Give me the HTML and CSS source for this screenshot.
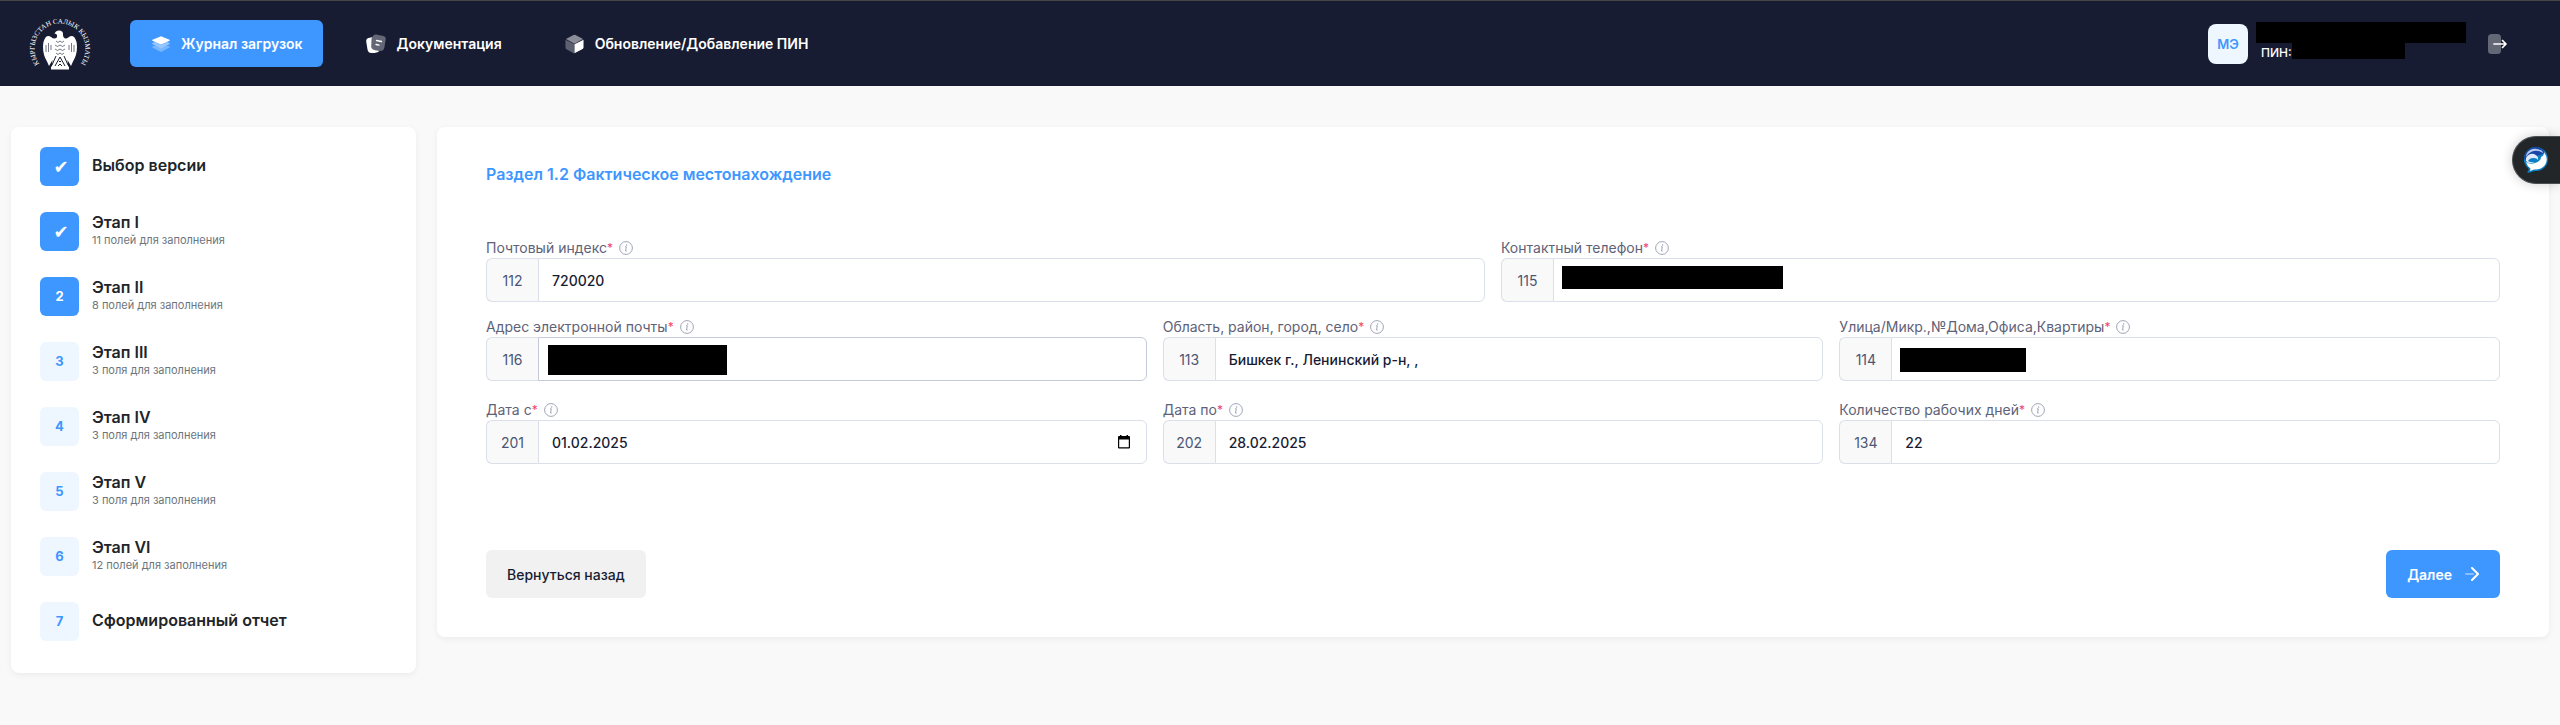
FILE: index.html
```html
<!DOCTYPE html>
<html lang="ru">
<head>
<meta charset="utf-8">
<meta name="viewport" content="width=device-width, initial-scale=1">
<title>Раздел 1.2 Фактическое местонахождение</title>
<link rel="stylesheet" href="styles.css">
</head>
<body>
<svg class="defs" aria-hidden="true">
  <symbol id="info" viewBox="0 0 14 14">
    <circle cx="7" cy="7" r="6.400" fill="none" stroke="currentColor" stroke-width="1"/>
    <path d="M6 5.800h1.300L6.500 10h1.200" fill="none" stroke="currentColor" stroke-width="1"/>
    <circle cx="7.600" cy="3.900" r=".75" fill="currentColor"/>
  </symbol>
</svg>
<header class="header">
  <a class="logo" href="#" aria-label="Кыргызстан салык кызматы">
    <svg width="64" height="56" viewBox="0 0 64 56">
      <path id="arc" d="M13.1 50.1A25.500 25.500 0 1 1 50.900 50.100" fill="none"/>
      <text class="logo-text"><textPath href="#arc" startOffset="50%" text-anchor="middle">КЫРГЫЗСТАН САЛЫК КЫЗМАТЫ</textPath></text>
      <path fill="#fff" d="M26.500 17.500q1.500-3 4.500-3 4.500 0 4 4.500 0 3 2 3.500 2 .2 4-1.500 3-2 5.500.5 2.500 3.500 2.500 9.500 0 8-4 14.500L43 50l-3.500-6 .5 6 1 1v2.500H23V51l1-1 .5-6L21 50l-2-4.500Q15 39 15 31q0-6 2.500-9.500 2.500-2.500 5.500-.5 2 1.700 4 1.500 2.500-.5 2-3.500-.5-1.500-2.500-1.500z"/>
      <path fill="none" stroke="#181c32" stroke-width=".6" d="M18 29v7m2.500-9v9m2.500-7v5M46 29v7m-2.500-9v9M41 29v5M28 25l2 1.500 2-1.500 2 1.500 2-1.500M27 29l2.500 1.500L32 29l2.500 1.500L37 29M27 33l2.500 1.500L32 33l2.500 1.500L37 33M28 37l2 1.500 2-1.500 2 1.500 2-1.500"/>
      <path fill="none" stroke="#181c32" stroke-width="1" d="m28 40-4 9m12-9 4 9M32 41l-5 9m5-9 5 9M31 46l1-1 1 1m-3 4 2-2 2 2"/>
    </svg>
  </a>
  <nav class="nav">
    <a class="nav-link active" href="#">
      <svg width="18" height="18" viewBox="0 0 18 18" fill="#fff">
        <path opacity=".3" d="M.5 11.500 3 10.500l6 2.800 6-2.800 2.500 1q.7.500 0 1L9.600 16.700q-.6.300-1.200 0L.5 12.500q-.7-.5 0-1z"/>
        <path opacity=".45" d="M.5 8 3 7l6 2.800L15 7l2.500 1q.7.500 0 1L9.600 13.200q-.6.300-1.200 0L.5 9q-.7-.5 0-1z"/>
        <path d="M8.400 1.400q.6-.3 1.200 0l7.900 3.400q.7.500 0 .9L9.600 9.300q-.6.300-1.200 0L.5 5.700q-.7-.4 0-.9z"/>
      </svg>
      Журнал загрузок</a>
    <a class="nav-link" href="#">
      <svg width="20" height="20" viewBox="0 0 20 20">
        <path fill="#fff" d="M7 3 2.500 4Q0 4.500.2 7.500l1.300 8q.7 3.500 4 3.500h3q3.500-.3 5-2L6 12z"/>
        <path fill="#646776" d="m10 .5 7.500 1.500q2.500.6 2.300 3l-1.500 9q-.8 3-4 3L9 16.200q-3.300-.6-3.800-3.200L5.500 5Q6.500.5 10 .5z"/>
        <path stroke="#fff" stroke-width="1.300" stroke-linecap="round" d="m10.500 6.500 5 1m-5.500 3 3 .6"/>
      </svg>
      Документация</a>
    <a class="nav-link" href="#">
      <svg width="19" height="20" viewBox="0 0 20 20">
        <path fill="#8b8d98" d="M9 .5q1-.5 2 0l8 4.200-9 5L1 4.700z"/>
        <path fill="#5d6070" d="M.5 5.500 9.700 10v10L1.500 15.500q-1-.5-1-1.500z"/>
        <path fill="#fff" d="M19.500 5.500 10 10.300v9.500l8.500-4.500q1-.5 1-1.500z"/>
      </svg>
      Обновление/Добавление ПИН</a>
  </nav>
  <div class="user">
    <span class="avatar">МЭ</span>
    <div class="user-info">
      <span class="mask mask-name"></span>
      <span class="pin">ПИН:<span class="mask mask-pin"></span></span>
    </div>
    <button class="logout" type="button" aria-label="Выйти">
      <svg width="20" height="20" viewBox="0 0 20 20">
        <rect x="0" y="0" width="13" height="20" rx="3.500" fill="#646776"/>
        <path d="M6 10h12M14.500 6.500 18 10l-3.500 3.500" fill="none" stroke="#fff" stroke-width="1.700" stroke-linecap="round" stroke-linejoin="round"/>
      </svg>
    </button>
  </div>
</header>

<main class="page">
  <aside class="card steps-card">
    <ol class="steps">
      <li class="step done checked"><span class="badge">✔</span><div><b>Выбор версии</b></div></li>
      <li class="step done checked"><span class="badge">✔</span><div><b>Этап I</b><small>11 полей для заполнения</small></div></li>
      <li class="step done"><span class="badge">2</span><div><b>Этап II</b><small>8 полей для заполнения</small></div></li>
      <li class="step"><span class="badge">3</span><div><b>Этап III</b><small>3 поля для заполнения</small></div></li>
      <li class="step"><span class="badge">4</span><div><b>Этап IV</b><small>3 поля для заполнения</small></div></li>
      <li class="step"><span class="badge">5</span><div><b>Этап V</b><small>3 поля для заполнения</small></div></li>
      <li class="step"><span class="badge">6</span><div><b>Этап VI</b><small>12 полей для заполнения</small></div></li>
      <li class="step"><span class="badge">7</span><div><b>Сформированный отчет</b></div></li>
    </ol>
  </aside>

  <form class="card form-card">
    <h1>Раздел 1.2 Фактическое местонахождение</h1>
    <div class="row">
      <div class="field">
        <label for="f112">Почтовый индекс<i>*</i><svg class="info"><use href="#info"/></svg></label>
        <div class="group"><span class="code">112</span><input id="f112" type="text" value="720020"></div>
      </div>
      <div class="field">
        <label for="f115">Контактный телефон<i>*</i><svg class="info"><use href="#info"/></svg></label>
        <div class="group"><span class="code">115</span><input id="f115" type="tel"><span class="mask mask-phone"></span></div>
      </div>
    </div>
    <div class="row">
      <div class="field">
        <label for="f116">Адрес электронной почты<i>*</i><svg class="info"><use href="#info"/></svg></label>
        <div class="group"><span class="code">116</span><input id="f116" class="focused" type="email"><span class="mask mask-mail"></span></div>
      </div>
      <div class="field">
        <label for="f113">Область, район, город, село<i>*</i><svg class="info"><use href="#info"/></svg></label>
        <div class="group"><span class="code">113</span><input id="f113" type="text" value="Бишкек г., Ленинский р-н, ,"></div>
      </div>
      <div class="field">
        <label for="f114">Улица/Микр.,№Дома,Офиса,Квартиры<i>*</i><svg class="info"><use href="#info"/></svg></label>
        <div class="group"><span class="code">114</span><input id="f114" type="text"><span class="mask mask-street"></span></div>
      </div>
    </div>
    <div class="row dates">
      <div class="field">
        <label for="f201">Дата с<i>*</i><svg class="info"><use href="#info"/></svg></label>
        <div class="group"><span class="code">201</span><input id="f201" type="text" value="01.02.2025">
          <button class="calendar" type="button" aria-label="Открыть календарь"><svg width="12" height="14" viewBox="0 0 12 14"><path fill="#000" fill-rule="evenodd" d="M2 0h1.500v1h5V0H10v1h1q1 0 1 1v10.500q0 1-1 1H1q-1 0-1-1V2q0-1 1-1h1zM1.200 4.500v7.800h9.600V4.500z"/></svg></button></div>
      </div>
      <div class="field">
        <label for="f202">Дата по<i>*</i><svg class="info"><use href="#info"/></svg></label>
        <div class="group"><span class="code">202</span><input id="f202" type="text" value="28.02.2025"></div>
      </div>
      <div class="field">
        <label for="f134">Количество рабочих дней<i>*</i><svg class="info"><use href="#info"/></svg></label>
        <div class="group"><span class="code">134</span><input id="f134" type="text" value="22"></div>
      </div>
    </div>
    <div class="actions">
      <button class="btn btn-light" type="button">Вернуться назад</button>
      <button class="btn btn-primary" type="submit">Далее
        <svg width="14" height="14" viewBox="0 0 14 14" fill="none" stroke="#fff" stroke-width="2" stroke-linecap="round" stroke-linejoin="round"><path opacity=".4" d="M1 7h7"/><path d="m7 1 6 6-6 6"/></svg>
      </button>
    </div>
  </form>
</main>

<button class="chat" type="button" aria-label="Чат">
  <svg width="24" height="26" viewBox="0 0 24 26">
    <path fill="#0b7fc4" d="M12 0a12 12 0 0 1 0 24q-3 0-5 1.200-3 1-4-.2 2-1 1.500-3.500A12 12 0 0 1 12 0z"/>
    <path fill="#1746a8" d="M12 0A12 12 0 0 0 0 12l1.500 1L21 6Q18 0 12 0z"/>
    <path fill="#fff" d="M20 5q5 7 1 13-4 5-11 4.500l-4 1.500.5-2.500Q3 19 2 15q4 3 9 1 6-2 6-6 3-1 3-5z"/>
    <path fill="#b9cbee" d="M3 6q4-5 10-4 6 1 6 4-6-4-12-1-4 2-5 5 0-2 1-4z"/>
    <path fill="#dfe9fa" d="M2 11q3-5 8-4 5 2 4 6-1-2-4-2-4-.5-6 3 3 2 7 1-6 3-9-1z"/>
  </svg>
</button>
</body>
</html>
```
FILE: styles.css
```css
* { box-sizing: border-box; }

body {
  margin: 0;
  min-height: 100vh;
  background: #f9f9f9;
  color: #181c32;
  font-family: Inter, "DejaVu Sans", sans-serif;
  font-size: 14px;
}

button, input { font: inherit; color: inherit; }
button { cursor: pointer; }
.defs { position: absolute; width: 0; height: 0; }
.mask { display: block; background: #000; }

.header {
  display: flex;
  align-items: center;
  height: 86px;
  padding: 0 52px 0 28px;
  border-top: 1px solid #464646;
  background: #181c32;
  color: #fff;
}
.logo { display: block; height: 56px; margin-right: 38px; }
.logo-text { fill: #fff; font: 7px "Liberation Serif", serif; }

.nav { display: flex; gap: 21px; }
.nav-link {
  display: flex;
  align-items: center;
  gap: 11px;
  height: 47px;
  padding: 0 20px 0 22px;
  border-radius: 6px;
  color: #fff;
  font-weight: 600;
  text-decoration: none;
}
.nav-link.active { background: #3e97ff; }

.user { display: flex; align-items: center; margin-left: auto; }
.avatar {
  display: grid;
  place-items: center;
  width: 40px;
  height: 40px;
  border-radius: 8px;
  background: #eef6ff;
  color: #3e97ff;
  font-size: 13px;
  font-weight: 600;
}
.user-info { margin: 0 0 6px 8px; }
.mask-name { width: 210px; height: 21px; }
.pin {
  display: flex;
  height: 16px;
  padding-left: 5px;
  font-size: 12px;
  font-weight: 500;
  line-height: 19px;
}
.mask-pin { width: 113px; }
.logout {
  width: 20px;
  height: 20px;
  margin-left: 22px;
  padding: 0;
  border: 0;
  background: none;
}

.page {
  display: grid;
  grid-template-columns: 405px 1fr;
  gap: 21px;
  align-items: start;
  padding: 41px 11px 0;
}
.card {
  border-radius: 8px;
  background: #fff;
  box-shadow: 0 2px 6px rgba(0, 0, 0, 0.06);
}

.steps-card { padding: 20px 29px 32px; }
.steps { display: grid; gap: 26px; margin: 0; padding: 0; list-style: none; }
.step { display: flex; align-items: center; gap: 13px; height: 39px; }
.step div { padding-bottom: 3px; }
.badge {
  display: grid;
  place-items: center;
  width: 39px;
  height: 39px;
  padding-bottom: 2px;
  border-radius: 6px;
  background: #eef6ff;
  color: #3e97ff;
  font-size: 13px;
  font-weight: 700;
}
.done .badge { background: #3e97ff; color: #fff; }
.checked .badge { padding: 0 0 0 3px; font-size: 18px; line-height: 20px; }
.step b { display: block; font-size: 16px; font-weight: 600; line-height: 20px; color: #212529; }
.step small { display: block; font-size: 11px; line-height: 16px; color: #6c757d; }

.form-card { padding: 36px 49px 39px; }
h1 {
  margin: 0 0 52px;
  color: #3e97ff;
  font-size: 16px;
  font-weight: 600;
  line-height: 22px;
}
.row { display: flex; gap: 16px; margin-bottom: 14px; }
.dates { margin-top: 18px; }
.field { flex: 1; min-width: 0; }
.field label {
  display: flex;
  align-items: center;
  height: 21px;
  color: #5e6278;
}
.field i { color: #f1416c; font-size: 12px; font-style: normal; }
.info { width: 14px; height: 14px; margin-left: 6px; color: #a1a5b7; }
.group { position: relative; display: flex; height: 44px; }
.code {
  flex: 0 0 52px;
  display: grid;
  place-items: center;
  border: 1px solid #dbdfe9;
  border-right: 0;
  border-radius: 6px 0 0 6px;
  background: #f9f9f9;
  color: #4b5675;
}
.group input {
  flex: 1;
  min-width: 0;
  padding: 0 13px;
  border: 1px solid #dbdfe9;
  border-radius: 0 6px 6px 0;
  outline: 0;
  background: #fff;
  font-weight: 500;
}
.group input.focused { border-color: #c4cada; }
.group .mask { position: absolute; }
.mask-phone { left: 61px; top: 8px; width: 221px; height: 23px; }
.mask-mail { left: 62px; top: 8px; width: 179px; height: 30px; }
.mask-street { left: 61px; top: 11px; width: 126px; height: 24px; }
.calendar {
  position: absolute;
  right: 17px;
  top: 15px;
  width: 12px;
  height: 14px;
  padding: 0;
  border: 0;
  background: none;
}
.calendar svg, .logout svg { display: block; }

.actions { display: flex; justify-content: space-between; margin-top: 86px; }
.btn {
  display: flex;
  align-items: center;
  gap: 13px;
  height: 48px;
  padding: 0 21px;
  border: 0;
  border-radius: 6px;
  font-weight: 500;
}
.btn-light { background: #f1f1f1; }
.btn-primary { background: #3e97ff; color: #fff; font-weight: 600; }

.chat {
  position: fixed;
  top: 136px;
  right: 0;
  width: 48px;
  height: 48px;
  padding: 0 0 0 11px;
  border: 1px solid #4a4e50;
  border-right: 0;
  border-radius: 24px 0 0 24px;
  background: #222628;
  box-shadow: 0 0 12px rgba(0, 0, 0, 0.2);
}
.chat svg { display: block; }
```
